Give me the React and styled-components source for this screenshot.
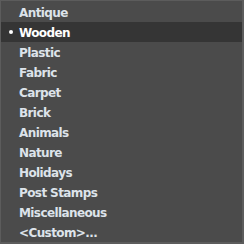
import React from "react";
import styled, { createGlobalStyle } from "styled-components";

const Global = createGlobalStyle`
  html, body { margin: 0; padding: 0; background: #4b4b4b; }
  #root { width: 244px; height: 244px; }
`;

const Menu = styled.ul`
  box-sizing: border-box;
  width: 244px;
  height: 244px;
  margin: 0;
  padding: 1px 0 0 0;
  list-style: none;
  background: #4b4b4b;
  border-style: solid;
  border-color: #5c5c5c;
  border-width: 1px 2px 2px 1px;
  display: flex;
  flex-direction: column;
  font-family: "DejaVu Sans", Verdana, sans-serif;
  font-weight: bold;
  font-size: 12px;
`;

const Item = styled.li`
  position: relative;
  box-sizing: border-box;
  height: 20px;
  display: flex;
  align-items: center;
  padding: 2px 0 0 18px;
  color: ${(p) => (p.$selected ? "#ffffff" : "#dde3ea")};
  background: ${(p) => (p.$selected ? "#353535" : "transparent")};
  letter-spacing: -0.6px;
  white-space: nowrap;
`;

const Bullet = styled.span`
  position: absolute;
  left: 8px;
  top: 8px;
  width: 4px;
  height: 4px;
  border-radius: 50%;
  background: #ffffff;
`;

const items = [
  "Antique",
  "Wooden",
  "Plastic",
  "Fabric",
  "Carpet",
  "Brick",
  "Animals",
  "Nature",
  "Holidays",
  "Post Stamps",
  "Miscellaneous",
  "<Custom>...",
];

export default function App() {
  return (
    <>
      <Global />
      <Menu>
        {items.map((t) => (
          <Item key={t} $selected={t === "Wooden"}>
            {t === "Wooden" && <Bullet />}
            {t}
          </Item>
        ))}
      </Menu>
    </>
  );
}
